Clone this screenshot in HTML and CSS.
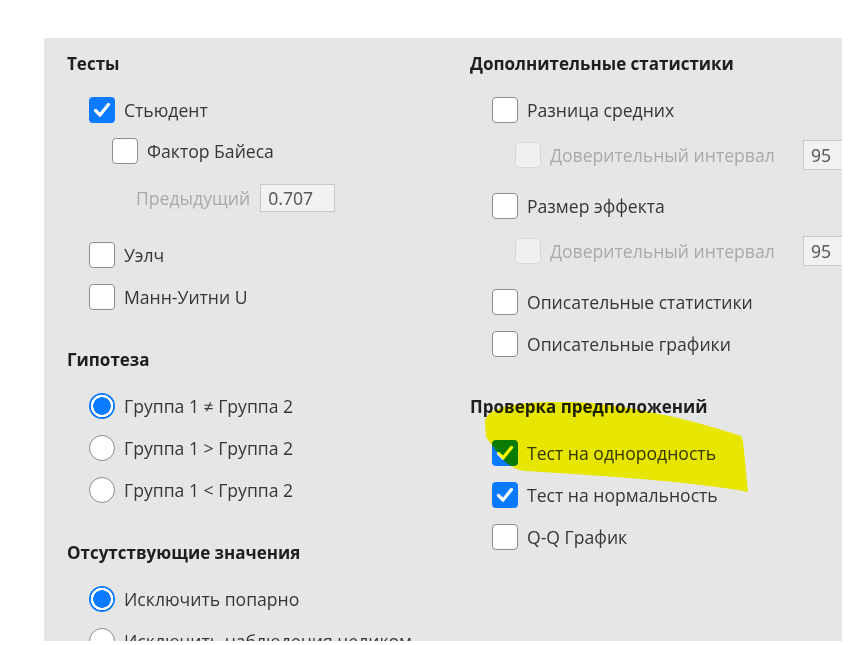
FILE: index.html
```html
<!DOCTYPE html>
<html lang="ru">
<head>
    <meta charset="UTF-8">
    <title>T-критерий для независимых выборок</title>
    <link rel="stylesheet" href="styles.css">
</head>
<body>
    <div class="panel">
        <!-- Левая колонка -->
        <div class="column column-left">
            <div class="group-title">Тесты</div>
            <div class="option">
                <span class="box checked"><svg viewBox="0 0 26 26"><path d="M6.5 13.5 L11 18 L19.5 7.5"/></svg></span>
                <span>Стьюдент</span>
            </div>
            <div class="option sub">
                <span class="box"></span>
                <span>Фактор Байеса</span>
            </div>
            <div class="prior-row">
                <span class="disabled-text">Предыдущий</span>
                <span class="field">0.707</span>
            </div>
            <div class="option">
                <span class="box"></span>
                <span>Уэлч</span>
            </div>
            <div class="option">
                <span class="box"></span>
                <span>Манн-Уитни U</span>
            </div>

            <div class="group-title spaced">Гипотеза</div>
            <div class="option">
                <span class="radio on"></span>
                <span>Группа 1 ≠ Группа 2</span>
            </div>
            <div class="option">
                <span class="radio"></span>
                <span>Группа 1 &gt; Группа 2</span>
            </div>
            <div class="option">
                <span class="radio"></span>
                <span>Группа 1 &lt; Группа 2</span>
            </div>

            <div class="group-title spaced">Отсутствующие значения</div>
            <div class="option">
                <span class="radio on"></span>
                <span>Исключить попарно</span>
            </div>
            <div class="option">
                <span class="radio"></span>
                <span>Исключить наблюдения целиком</span>
            </div>
        </div>

        <!-- Правая колонка -->
        <div class="column column-right">
            <div class="group-title">Дополнительные статистики</div>
            <div class="option">
                <span class="box"></span>
                <span>Разница средних</span>
            </div>
            <div class="ci-row">
                <span class="box disabled"></span>
                <span class="ci-label disabled-text">Доверительный интервал</span>
                <span class="field wide">95</span>
            </div>
            <div class="option">
                <span class="box"></span>
                <span>Размер эффекта</span>
            </div>
            <div class="ci-row">
                <span class="box disabled"></span>
                <span class="ci-label disabled-text">Доверительный интервал</span>
                <span class="field wide">95</span>
            </div>
            <div class="option">
                <span class="box"></span>
                <span>Описательные статистики</span>
            </div>
            <div class="option">
                <span class="box"></span>
                <span>Описательные графики</span>
            </div>

            <div class="group-title spaced">Проверка предположений</div>
            <div class="option">
                <span class="box checked"><svg viewBox="0 0 26 26"><path d="M6.5 13.5 L11 18 L19.5 7.5"/></svg></span>
                <span>Тест на однородность</span>
            </div>
            <div class="option">
                <span class="box checked"><svg viewBox="0 0 26 26"><path d="M6.5 13.5 L11 18 L19.5 7.5"/></svg></span>
                <span>Тест на нормальность</span>
            </div>
            <div class="option">
                <span class="box"></span>
                <span>Q-Q График</span>
            </div>
        </div>
    </div>

    <!-- Пометка маркером -->
    <svg class="marker" viewBox="0 0 868 645">
        <path d="M485 421 C488 406 520 401 572 402 C625 404 690 419 741 436 L743 441 L748 492 C705 483 610 476 526 471 C518 471 508 466 500 456 L486 437 Z"/>
    </svg>
</body>
</html>
```

FILE: styles.css
```css
body {
    margin: 0;
    background-color: #fff;
    font-family: "Open Sans", "Noto Sans", sans-serif;
    font-size: 17.6px;
    color: #363636;
}
.panel {
    margin: 38px 0 0 44px;
    width: 798px;
    height: 603px;
    background-color: #e6e6e6;
    display: flex;
    overflow: hidden;
    padding-top: 13px;
    box-sizing: border-box;
}
.column {
    display: flex;
    flex-direction: column;
    flex-shrink: 0;
}
.column-left {
    width: 426px;
    padding-left: 23px;
    box-sizing: border-box;
}
.column-right {
    width: 420px;
}
.group-title {
    height: 26px;
    line-height: 26px;
    font-weight: bold;
    font-size: 17px;
    color: #1e1e1e;
    margin-bottom: 12px;
    white-space: nowrap;
}
.group-title.spaced {
    margin-top: 29px;
}
.option {
    height: 42px;
    display: flex;
    align-items: center;
    padding-left: 22px;
    white-space: nowrap;
    flex-shrink: 0;
}
.option.sub {
    padding-left: 45px;
    height: 40px;
}
.box, .radio {
    width: 26px;
    height: 26px;
    box-sizing: border-box;
    margin-right: 9px;
    flex-shrink: 0;
    background-color: #fff;
    border: 1.5px solid #8c8c8c;
}
.box {
    border-radius: 4px;
}
.box svg {
    display: block;
    width: 100%;
    height: 100%;
}
.box path {
    fill: none;
    stroke: #fff;
    stroke-width: 3.2;
    stroke-linecap: round;
    stroke-linejoin: round;
}
.box.checked {
    background-color: #0a7aff;
    border: none;
}
.box.disabled {
    background-color: #f0f0f0;
    border-color: #d8d8d8;
}
.radio {
    border-radius: 50%;
}
.radio.on {
    border: none;
    background: radial-gradient(circle, #0a7aff 0 8.5px, #fff 9px 11px, #0a7aff 11.5px);
}
.disabled-text {
    color: #a9a9a9;
}
.prior-row {
    height: 48px;
    display: flex;
    align-items: center;
    padding-left: 69px;
    margin-top: 3px;
    margin-bottom: 12px;
    flex-shrink: 0;
}
.prior-row .disabled-text {
    margin-right: 10px;
}
.field {
    height: 28px;
    line-height: 26px;
    box-sizing: border-box;
    width: 75px;
    padding: 0 7px;
    background-color: #f2f2f2;
    border: 1px solid #c8c8c8;
    color: #5a5a5a;
    font-family: "Noto Sans", sans-serif;
}
.field.wide {
    height: 30px;
    line-height: 28px;
    width: 60px;
}
.ci-row {
    height: 48px;
    margin-bottom: 6px;
    display: flex;
    align-items: center;
    padding-left: 45px;
    white-space: nowrap;
    flex-shrink: 0;
}
.ci-label {
    width: 253px;
    flex-shrink: 0;
}
.marker {
    position: absolute;
    left: 0;
    top: 0;
    width: 868px;
    height: 645px;
    pointer-events: none;
    mix-blend-mode: multiply;
}
.marker path {
    fill: #ffff00;
}
```
